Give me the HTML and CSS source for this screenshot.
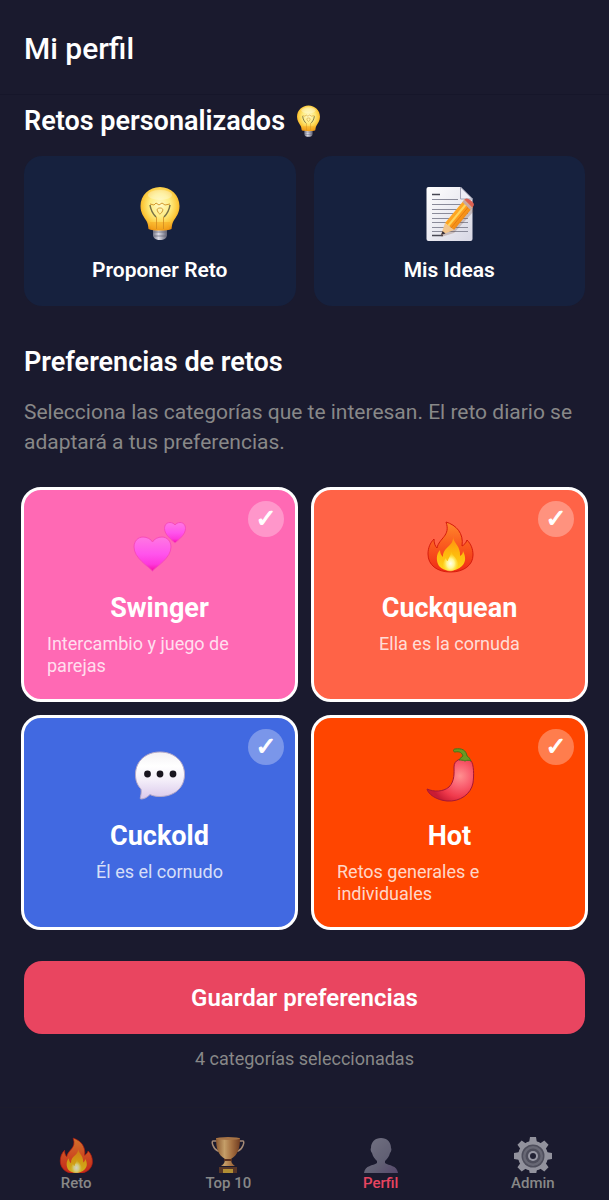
FILE: index.html
```html
<!DOCTYPE html>
<html lang="es">
  <head>
    <meta charset="UTF-8" />
    <meta name="viewport" content="width=device-width, initial-scale=1.0" />
    <title>Mi perfil</title>
    <link rel="stylesheet" href="styles.css">
  </head>
  <body>
    <!-- Iconos compartidos -->
    <svg class="sprite" aria-hidden="true">
      <defs>
        <radialGradient id="bulbGlass" cx="0.5" cy="0.42" r="0.6">
          <stop offset="0" stop-color="#fffac8" />
          <stop offset="0.45" stop-color="#feec80" />
          <stop offset="0.75" stop-color="#fcc83a" />
          <stop offset="1" stop-color="#ec9210" />
        </radialGradient>
        <linearGradient id="metal" x1="0" x2="1" y1="0" y2="0">
          <stop offset="0" stop-color="#777888" />
          <stop offset="0.4" stop-color="#dcdce6" />
          <stop offset="1" stop-color="#626274" />
        </linearGradient>
        <linearGradient id="flameOuter" x1="0" x2="0" y1="0" y2="1">
          <stop offset="0" stop-color="#ff8a2c" />
          <stop offset="0.4" stop-color="#fb6020" />
          <stop offset="1" stop-color="#f02a16" />
        </linearGradient>
        <linearGradient id="flameInner" x1="0" x2="0" y1="0" y2="1">
          <stop offset="0" stop-color="#ff8a12" />
          <stop offset="0.5" stop-color="#feb80c" />
          <stop offset="1" stop-color="#ffd41c" />
        </linearGradient>
        <radialGradient id="flameCore" cx="0.5" cy="0.6" r="0.5">
          <stop offset="0" stop-color="#fffff0" />
          <stop offset="0.5" stop-color="#fff794" />
          <stop offset="1" stop-color="#ffe034" stop-opacity="0.3" />
        </radialGradient>
      </defs>
      <symbol id="bulb" viewBox="0 0 56 56">
        <path d="M21 41h14v8c0 3-3 5-7 5s-7-2-7-5z" fill="url(#metal)" />
        <path d="M21 46h14M22 50h12" stroke="#666879" stroke-width="1" opacity="0.7" />
        <path d="M28 1C17 1 8.500 9.500 8.500 20c0 7 3.500 11 6 15 1.500 2.500 1.500 5 2 8 4 2 19 2 23 0 .5-3 .5-5.500 2-8 2.500-4 6-8 6-15C47.500 9.500 39 1 28 1z" fill="url(#bulbGlass)" />
        <path d="M18 36c1 3 1 4 1 7 4 1 14 1 18 0 0-3 0-4 1-7z" fill="#f5a420" opacity="0.5" />
        <path d="M18 19c1 7 4 10 6 12M38 19c-1 7-4 10-6 12" fill="none" stroke="#5f5a3c" stroke-width="1.500" opacity="0.85" />
        <path d="M24.500 31v12M31.500 31v12" fill="none" stroke="#d08a20" stroke-width="1" opacity="0.8" />
        <path d="M18 18l4 1 2-2 3 2 3-2 3 2 5-1M26 26c-2-3 0-4 2-4s4 1 2 4-3 2-4 0" fill="none" stroke="#d39a30" stroke-width="1" />
        <ellipse cx="28" cy="9" rx="12" ry="5" fill="#fff" opacity="0.3" />
      </symbol>
      <symbol id="fire" viewBox="0 0 56 56">
        <path d="M24 3c10 3 18 11 16 24 2-1 4-3 5-6 4 4 6 9 6 15 0 10-9 17-22.500 17S6 46 6 35c0-6 2-11 6-15 0 4 1 7 3 9 2-10 14-12 9-26z" fill="url(#flameOuter)" stroke="#d51b0c" stroke-width="1" />
        <path d="M31 17c0 7 8 10 7 20 2-1 3-3 3-5 3 6 3 11-1 15-6 6-18 6-23 0-3-5-3-12 1-16 0 3 1 5 3 7 0-11 11-10 10-21z" fill="url(#flameInner)" />
        <path d="M29 33c3 5 8 8 7 14-2 7-14 7-15 0 0-4 1-6 3-8 0 2 1 3 2 3 0-3 3-5 3-9z" fill="url(#flameCore)" />
      </symbol>
    </svg>

    <header class="topbar">
      <h1>Mi perfil</h1>
    </header>

    <main class="content">
      <section>
        <h2>Retos personalizados <svg class="title-icon" aria-hidden="true"><use href="#bulb" /></svg></h2>
        <div class="actions">
          <button type="button" class="action">
            <svg class="icon" aria-hidden="true"><use href="#bulb" /></svg>
            <span>Proponer Reto</span>
          </button>
          <button type="button" class="action">
            <svg class="icon" viewBox="0 0 56 56" aria-hidden="true">
              <defs>
                <linearGradient id="paper" x1="0" x2="1" y1="0" y2="1">
                  <stop offset="0" stop-color="#ffffff" />
                  <stop offset="1" stop-color="#d7d7e4" />
                </linearGradient>
                <linearGradient id="pencil" x1="0" x2="1" y1="0" y2="1">
                  <stop offset="0" stop-color="#ffc63c" />
                  <stop offset="0.5" stop-color="#ff9e1b" />
                  <stop offset="1" stop-color="#ca5d10" />
                </linearGradient>
              </defs>
              <path d="M7.500 1h32L51.500 13v40q0 2-2 2h-42q-2 0-2-2V3q0-2 2-2z" fill="url(#paper)" />
              <path d="M39.500 1V13h12z" fill="#eeeef6" stroke="#a2a2b4" />
              <path d="M11 8.500h8M11 49.500h11" stroke="#484853" stroke-width="1.500" />
              <path d="M11 13.500h26M11 18.500h36M11 23.500h36M11 27.500h36M11 32.500h36M11 36.500h36M11 41.500h36M11 45.500h36" stroke="#8a8b9a" />
              <path d="M20 51l5-10 21-22 7 6-20 22z" fill="#70432e" opacity="0.25" />
              <path d="M24 37L44 13l8 8-19 23z" fill="url(#pencil)" />
              <path d="M27 40l19-23" stroke="#ffd45b" stroke-width="2" />
              <path d="M30 42l19-23" stroke="#e47c12" />
              <path d="M20 49l4-12 9 7z" fill="#f3c68e" />
              <path d="M20 49l1.500-4 3 2.500z" fill="#383039" />
              <path d="M41.500 16l8 8 2-2.500-8-8z" fill="#c9a9a2" />
              <path d="M43.500 13.500c2-2 4-1 7 1.500s3 4 1 6.500z" fill="#dc6052" />
            </svg>
            <span>Mis Ideas</span>
          </button>
        </div>
      </section>

      <section class="preferences">
        <h2>Preferencias de retos</h2>
        <p class="intro">Selecciona las categorías que te interesan. El reto diario se adaptará a tus preferencias.</p>

        <form>
          <div class="categories">
            <label class="category swinger">
              <input type="checkbox" name="categoria" value="swinger" checked />
              <svg class="icon" viewBox="0 0 56 56" aria-hidden="true">
                <defs>
                  <linearGradient id="heart" x1="0" x2="0" y1="0" y2="1">
                    <stop offset="0" stop-color="#ff78e2" />
                    <stop offset="0.5" stop-color="#ff54ec" />
                    <stop offset="0.8" stop-color="#fe38dc" />
                    <stop offset="1" stop-color="#f80ca8" />
                  </linearGradient>
                </defs>
                <path d="M20.500 52C16 47 2 39 2 28c0-6 4-10 9-10 4 0 8 2 9.500 5 1.500-3 5.500-5 9.500-5 5 0 9 4 9 10 0 11-14 19-18.500 24z" fill="url(#heart)" stroke="#f84cba" stroke-linejoin="round" />
                <path d="M43 24c-3-3-10.500-8-10.500-14.500 0-3.500 2-6 5.500-6 2 0 4 1 5 2.500 1-1.500 3-2.500 5-2.500 3.500 0 5.500 2.500 5.500 6C53.500 16 46 21 43 24z" fill="url(#heart)" stroke="#f84cba" stroke-linejoin="round" />
              </svg>
              <span class="name">Swinger</span>
              <span class="desc">Intercambio y juego de parejas</span>
            </label>

            <label class="category cuckquean">
              <input type="checkbox" name="categoria" value="cuckquean" checked />
              <svg class="icon" aria-hidden="true"><use href="#fire" /></svg>
              <span class="name">Cuckquean</span>
              <span class="desc">Ella es la cornuda</span>
            </label>

            <label class="category cuckold">
              <input type="checkbox" name="categoria" value="cuckold" checked />
              <svg class="icon" viewBox="0 0 56 56" aria-hidden="true">
                <defs>
                  <linearGradient id="bubble" x1="0" x2="0" y1="0" y2="1">
                    <stop offset="0" stop-color="#f3f1f4" />
                    <stop offset="0.3" stop-color="#ffffff" />
                    <stop offset="0.6" stop-color="#f4eef9" />
                    <stop offset="1" stop-color="#d9c8eb" />
                  </linearGradient>
                </defs>
                <path d="M28 5c14 0 24.500 9 24.500 22.500S42 49.500 28 49.500c-4 0-7-.5-10-2-3 3-6 4.500-9 4.500-2 0 1-4 0-10-4-4-5.500-9-5.500-14.500C3.500 14 14 5 28 5z" fill="url(#bubble)" stroke="#b5a9c7" stroke-width="1" />
                <circle cx="15.500" cy="27" r="3.400" fill="#19151f" />
                <circle cx="28" cy="27" r="3.400" fill="#19151f" />
                <circle cx="41" cy="27" r="3.400" fill="#19151f" />
              </svg>
              <span class="name">Cuckold</span>
              <span class="desc">Él es el cornudo</span>
            </label>

            <label class="category hot">
              <input type="checkbox" name="categoria" value="hot" checked />
              <svg class="icon" viewBox="0 0 56 56" aria-hidden="true">
                <defs>
                  <radialGradient id="pepper" gradientUnits="userSpaceOnUse" cx="38" cy="29" r="30">
                    <stop offset="0" stop-color="#ff9090" />
                    <stop offset="0.35" stop-color="#fa6272" />
                    <stop offset="0.7" stop-color="#f03a4c" />
                    <stop offset="1" stop-color="#c81c34" />
                  </radialGradient>
                </defs>
                <path d="M36 13c4-2 10-2 13 1 3 3 3 15 2 22-2 11-13 19-26 18C14 53 6 47 5 42c7 3 16 3 22-2 6-6 5-15 5-20 0-4 2-6 4-7z" fill="url(#pepper)" stroke="#a61735" />
                <path d="M37 13c1-2 3-3 4-4-1-3-3-5-8-4-2 0-2-3 0-3 7-1 11 1 12 7 2 1 3 3 4 5-2-1-4-1-6 0-2-1-4-1-6-1z" fill="#6a9a22" stroke="#44761c" stroke-width="1" />
              </svg>
              <span class="name">Hot</span>
              <span class="desc">Retos generales e individuales</span>
            </label>
          </div>

          <button type="submit" class="save">Guardar preferencias</button>
          <p class="count">4 categorías seleccionadas</p>
        </form>
      </section>
    </main>

    <nav class="tabbar">
      <a href="#reto">
        <svg viewBox="0 0 36 36" aria-hidden="true"><use href="#fire" x="-2" y="-1" width="40" height="40" /></svg>
        <span>Reto</span>
      </a>
      <a href="#top">
        <svg viewBox="0 0 36 36" aria-hidden="true">
          <defs>
            <linearGradient id="cup" x1="0" x2="1" y1="0" y2="0">
              <stop offset="0" stop-color="#a7672f" />
              <stop offset="0.35" stop-color="#f0c078" />
              <stop offset="0.65" stop-color="#c98747" />
              <stop offset="1" stop-color="#88471f" />
            </linearGradient>
          </defs>
          <path d="M8 4H3c-2 0 0 8 5 10h3M28 4h5c2 0 0 8-5 10h-3" fill="none" stroke="#c9a88a" stroke-width="1.500" />
          <path d="M6 1h24c0 10-2 17-9 21 0 3 1 5 4 7H11c3-2 4-4 4-7C8 18 6 11 6 1z" fill="url(#cup)" />
          <ellipse cx="18" cy="1.500" rx="12" ry="1.500" fill="#c98a4c" />
          <path d="M14 23h8" stroke="#6a3518" stroke-width="2" />
          <path d="M9 30h18v6H9z" fill="#673e26" />
          <path d="M13 32h10v4H13z" fill="#d7ac36" />
        </svg>
        <span>Top 10</span>
      </a>
      <a href="#perfil" class="active" aria-current="page">
        <svg viewBox="0 0 36 36" aria-hidden="true">
          <defs>
            <linearGradient id="person" x1="0" x2="1" y1="0" y2="1">
              <stop offset="0" stop-color="#9a99a8" />
              <stop offset="0.6" stop-color="#807e92" />
              <stop offset="1" stop-color="#705a86" />
            </linearGradient>
          </defs>
          <path d="M18 1c6 0 10 4 10 10 1 1 0 4-1 5-1 4-3 6-5 8v2c4 3 12 2 13 10H1c1-8 9-7 13-10v-2c-2-2-4-4-5-8-1-1-2-4-1-5C8 5 12 1 18 1z" fill="url(#person)" />
        </svg>
        <span>Perfil</span>
      </a>
      <a href="#admin">
        <svg class="gear" viewBox="0 0 38 36" aria-hidden="true">
          <g fill="#b0b0b9" transform="translate(19 19)">
            <circle r="15" />
            <path id="teeth" d="M-4-13l1-6h6l1 6zM-4 13l1 6h6l1-6zM-13-4l-6 1v6l6 1zM13-4l6 1v6l-6 1z" />
            <use href="#teeth" transform="rotate(45)" />
            <circle r="11.500" fill="#5c5c68" />
            <circle r="10" fill="#7c7c87" />
            <circle r="7.500" fill="#5c5c68" />
            <circle r="5" fill="#b8b8c2" />
            <circle r="3" fill="#252536" />
          </g>
        </svg>
        <span>Admin</span>
      </a>
    </nav>
  </body>
</html>
```
FILE: styles.css
```css
* {
  font-family: Roboto, "Liberation Sans", sans-serif;
  margin: 0;
  padding: 0;
  box-sizing: border-box;
}
body {
  display: flex;
  flex-direction: column;
  min-height: 100vh;
  background-color: #1a1a2e;
  color: #fff;
}
button {
  border: none;
  color: inherit;
  cursor: pointer;
}
.sprite {
  position: absolute;
  width: 0;
  height: 0;
}

/* Cabecera */
.topbar {
  padding: 29px 24px 25px;
  border-bottom: 1px solid #16162a;
}
h1 {
  font-size: 30px;
  line-height: 40px;
  font-weight: 500;
}
h2 {
  font-size: 27px;
  line-height: 36px;
  font-weight: 600;
}
.content {
  flex: 1;
  padding: 8px 24px 36px;
}
.title-icon {
  width: 33px;
  height: 33px;
  vertical-align: -4px;
  margin: -4px 0;
}
.icon {
  width: 56px;
  height: 56px;
}

/* Acciones */
.actions {
  display: grid;
  grid-template-columns: 1fr 1fr;
  gap: 18px;
  margin-top: 17px;
}
.action {
  display: flex;
  flex-direction: column;
  align-items: center;
  gap: 14px;
  padding: 30px 16px 22px;
  border-radius: 18px;
  background-color: #16213e;
  font-size: 21px;
  line-height: 28px;
  font-weight: 600;
}

/* Preferencias */
.preferences {
  margin-top: 38px;
}
.intro {
  margin-top: 17px;
  font-size: 21px;
  line-height: 30px;
  color: #888;
}
.categories {
  display: grid;
  grid-template-columns: 1fr 1fr;
  gap: 13px;
  margin: 30px -3px 0;
}
.category {
  position: relative;
  display: flex;
  flex-direction: column;
  align-items: center;
  min-height: 215px;
  padding: 29px 23px 22px;
  border: 3px solid #fff;
  border-radius: 20px;
  cursor: pointer;
}
.swinger {
  background-color: #ff69b4;
}
.cuckquean {
  background-color: #ff6347;
}
.cuckold {
  background-color: #4169e1;
}
.hot {
  background-color: #ff4500;
}
.category input {
  appearance: none;
  position: absolute;
  top: 11px;
  right: 11px;
  width: 36px;
  height: 36px;
  border-radius: 50%;
  background-color: rgba(255, 255, 255, 0.3);
  cursor: pointer;
}
.category input:checked::before {
  content: "✓";
  display: block;
  font-family: "DejaVu Sans", sans-serif;
  font-size: 25px;
  line-height: 36px;
  font-weight: bold;
  text-align: center;
  color: #fff;
  -webkit-text-stroke: 1px #fff;
}
.name {
  margin-top: 17px;
  font-size: 27px;
  line-height: 32px;
  font-weight: 700;
}
.desc {
  margin-top: 9px;
  font-size: 18px;
  line-height: 22px;
  color: rgba(255, 255, 255, 0.8);
}
.save {
  width: 100%;
  margin-top: 31px;
  padding: 21px 20px 19px;
  border-radius: 18px;
  background-color: #e94560;
  font-size: 24px;
  line-height: 33px;
  font-weight: 600;
}
.count {
  margin-top: 13px;
  font-size: 18px;
  line-height: 24px;
  text-align: center;
  color: #888;
}

/* Menú inferior */
.tabbar {
  display: grid;
  grid-template-columns: repeat(4, 1fr);
  padding: 29px 0 7px;
  border-top: 1px solid #1c1b2c;
}
.tabbar a {
  display: flex;
  flex-direction: column;
  align-items: center;
  font-size: 15px;
  line-height: 20px;
  font-weight: 500;
  color: #888;
  text-decoration: none;
}
.tabbar svg {
  width: 36px;
  height: 36px;
  opacity: 0.8;
}
.tabbar .gear {
  width: 38px;
}
.tabbar .active {
  color: #e94560;
}
.tabbar .active svg {
  opacity: 0.7;
}
```
